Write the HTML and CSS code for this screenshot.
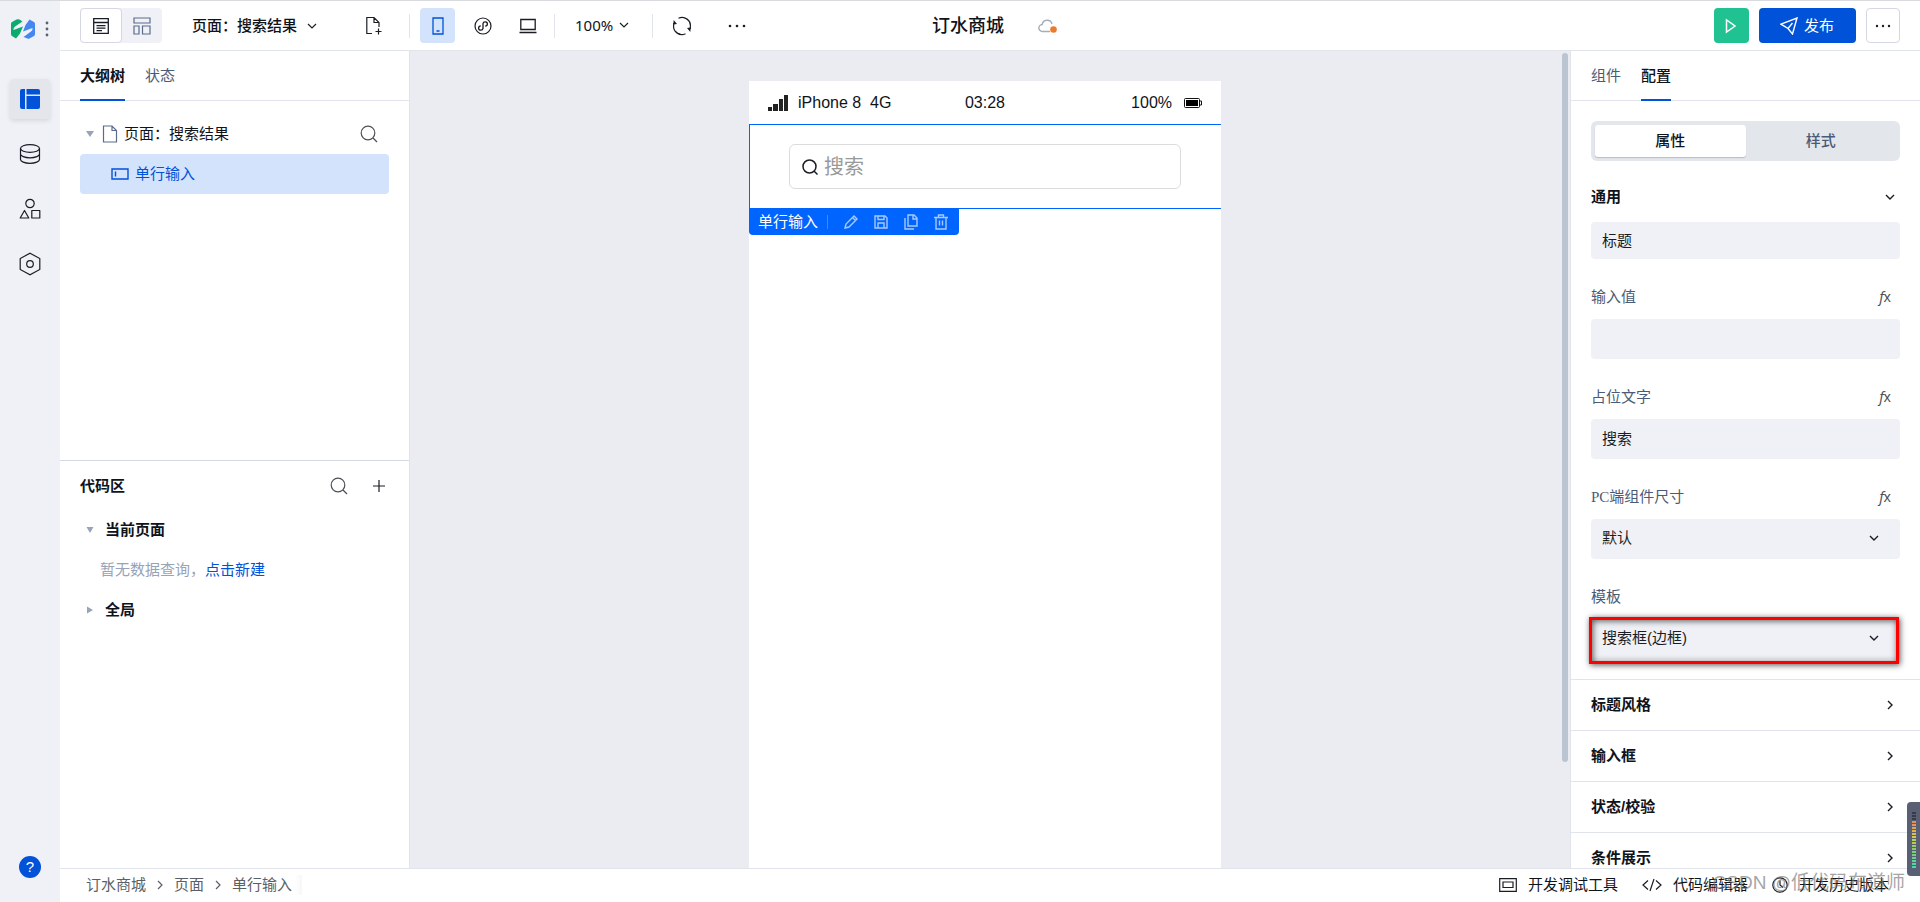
FILE: index.html
```html
<!DOCTYPE html>
<html lang="zh-CN">
<head>
<meta charset="utf-8">
<title>订水商城</title>
<link rel="stylesheet" href="styles.css">
</head>
<body>
<div class="app">
  <nav class="rail" aria-label="主导航">
    <div class="rail-brand">
      <svg width="24" height="20" viewBox="0 0 24 20"><path d="M0 5Q0 3.500 1 3L5.500.5Q7 0 8.500.5L11.500 2.500 4 7.500Q2 9 2.500 11L12 7.500 9 14.500 5 19.500 1 17Q0 16.500 0 15z" fill="#0aab6e"/><path d="M24 15q0 1.500-1 2l-4.500 2.500q-1 .5-2 0L12.500 18l7.500-5.500q2-1.500 1.500-3.500L12 12.500 14.500 6 18.500.5 23 3q1 .5 1 2z" fill="#4587f0"/></svg>
      <button class="plain" aria-label="菜单"><svg width="4" height="16" viewBox="0 0 4 16" fill="#5a6270"><circle cx="2" cy="2" r="1.400"/><circle cx="2" cy="8" r="1.400"/><circle cx="2" cy="14" r="1.400"/></svg></button>
    </div>
    <button class="rail-item active" aria-label="页面"><svg width="20" height="20" viewBox="0 0 20 20" fill="#0052d9"><path d="M2 0h3v20H2a2 2 0 0 1-2-2V2a2 2 0 0 1 2-2zM6.500 0H18a2 2 0 0 1 2 2v3.500H6.500zM6.500 7H20v11a2 2 0 0 1-2 2H6.500z"/></svg></button>
    <button class="rail-item" aria-label="数据"><svg class="ic" width="22" height="22" viewBox="0 0 22 22"><ellipse cx="11" cy="5.500" rx="9.500" ry="3.800"/><path d="M1.500 5.500v11c0 2 4 3.800 9.500 3.800s9.500-1.800 9.500-3.800v-11M1.500 11C1.500 13 5.500 14.800 11 14.800s9.500-1.800 9.500-3.800"/></svg></button>
    <button class="rail-item" aria-label="素材"><svg class="ic" width="22" height="22" viewBox="0 0 22 22"><circle cx="11" cy="5.500" r="4.200"/><path d="M5.500 12.500 1.200 20h8.600zM12.800 12.500h8v7.500h-8z" stroke-linejoin="round"/></svg></button>
    <button class="rail-item" aria-label="设置"><svg class="ic" width="22" height="24" viewBox="0 0 22 24"><path d="m11 1.200 9.800 5.300v11L11 22.800l-9.800-5.300v-11z"/><circle cx="11" cy="12" r="3.300"/></svg></button>
    <button class="help" aria-label="帮助">?</button>
  </nav>

  <header class="topbar">
    <div class="tools">
      <div class="view-switch">
        <button class="view on" aria-label="大纲视图"><svg class="ic" width="16" height="16" viewBox="0 0 16 16"><path d="M.7.7h14.600v14.600H.7zM.7 4.500h14.600M3.500 7.700h9M3.500 10.200h9M3.500 12.700h5.500" stroke-width="1.300"/></svg></button>
        <button class="view" aria-label="布局视图"><svg class="ic slate" width="18" height="18" viewBox="0 0 18 18"><path d="M1 1h16v5H1zM1 9h5v8H1zM9.500 9H17v8H9.500z"/></svg></button>
      </div>
      <button class="page-pick">页面：搜索结果 <svg class="ic" width="12" height="12" viewBox="0 0 12 12"><path d="m2 4 4 4 4-4"/></svg></button>
      <button class="tool new-page" aria-label="新建页面"><svg class="ic" width="18" height="20" viewBox="0 0 18 20"><path d="M7 17.500H1.800V1.500H9l5 5V11M9 1.500v5h5M13.500 12.500v6M10.500 15.500h6"/></svg></button>
      <span class="rule"></span>
      <div class="devices">
        <button class="tool chosen" aria-label="手机"><svg class="ic blue" width="12" height="18" viewBox="0 0 12 18"><path d="M1 1h10v16H1zM4.500 14h3" stroke-width="1.300"/></svg></button>
        <button class="tool" aria-label="小程序"><svg class="ic" width="18" height="18" viewBox="0 0 18 18"><circle cx="9" cy="9" r="8"/><path d="M6.800 8.800a2.200 2.200 0 1 0 2.200 2.500V6.700a2.200 2.200 0 1 1 2.200 2.500" stroke-width="1.300"/></svg></button>
        <button class="tool" aria-label="电脑"><svg class="ic" width="18" height="16" viewBox="0 0 18 16"><path d="M1.800 1.500h14.400v10H1.800zM.5 14.500h17" stroke-width="1.300"/></svg></button>
      </div>
      <span class="rule"></span>
      <button class="zoom">100% <svg class="ic" width="12" height="12" viewBox="0 0 12 12"><path d="m2 4 4 4 4-4"/></svg></button>
      <span class="rule"></span>
      <button class="tool refresh" aria-label="刷新"><svg class="ic" width="20" height="20" viewBox="0 0 20 20"><path d="M6.500 2.200A8.300 8.300 0 0 1 18.300 11v2M13.500 17.800A8.300 8.300 0 0 1 1.700 9V7M3.500 15.500a8.300 8.300 0 0 0 5 2.700M16.500 4.500a8.300 8.300 0 0 0-4-2.500"/><path d="m15 12 3.300 4 .4-4.500zM5 8 1.700 4l-.4 4.500z" fill="#1a1d24" stroke="none"/></svg></button>
      <button class="tool" aria-label="更多工具"><svg width="18" height="4" viewBox="0 0 18 4" fill="#1a1d24"><circle cx="2" cy="2" r="1.300"/><circle cx="9" cy="2" r="1.300"/><circle cx="16" cy="2" r="1.300"/></svg></button>
    </div>
    <div class="app-name">
      <h1>订水商城</h1>
      <svg width="20" height="16" viewBox="0 0 20 16"><path d="M12 13.500H4.500a3.500 3.500 0 0 1-.3-7A5 5 0 0 1 14 6" fill="none" stroke="#a3adbd" stroke-width="1.400"/><circle cx="15.500" cy="11.500" r="3.300" fill="#ed7b2f"/></svg>
    </div>
    <div class="actions">
      <button class="run" aria-label="预览"><svg width="12" height="16" viewBox="0 0 12 16"><path d="M1.500 2v12L10 8z" fill="none" stroke="#fff" stroke-width="1.500"/></svg></button>
      <button class="publish"><svg width="18" height="18" viewBox="0 0 18 18" fill="none" stroke="#fff" stroke-width="1.400"><path d="M1 7.200 17 1l-4.500 16L8 11.500zM8 11.500 12.500 6"/></svg>发布</button>
      <button class="more" aria-label="更多"><svg width="16" height="4" viewBox="0 0 16 4" fill="#1a1d24"><circle cx="2" cy="2" r="1.200"/><circle cx="8" cy="2" r="1.200"/><circle cx="14" cy="2" r="1.200"/></svg></button>
    </div>
  </header>

  <aside class="left">
    <section class="outline">
      <div class="tabs"><button class="tab current bold">大纲树</button><button class="tab">状态</button></div>
      <div class="tree">
        <div class="node">
          <svg class="caret" width="8" height="6" viewBox="0 0 8 6"><path d="M0 0h8L4 6z"/></svg>
          <svg class="ic slate" width="16" height="18" viewBox="0 0 16 18"><path d="M1.500 1H10l4.500 4.500V17h-13zM10 1v4.500h4.500"/></svg>
          <span class="node-name">页面：搜索结果</span>
          <button class="plain" aria-label="搜索大纲"><svg class="ic thin" width="18" height="18" viewBox="0 0 18 18"><circle cx="8" cy="8" r="6.800"/><path d="m13 13 4 4"/></svg></button>
        </div>
        <div class="node selected">
          <svg class="ic blue" width="18" height="12" viewBox="0 0 18 12"><path d="M1 1h16v10H1zM4.500 3.500v5" stroke-width="1.400"/></svg>
          <span>单行输入</span>
        </div>
      </div>
    </section>
    <section class="code">
      <div class="code-head">
        <h2>代码区</h2>
        <button class="plain" aria-label="搜索代码"><svg class="ic thin" width="18" height="18" viewBox="0 0 18 18"><circle cx="8" cy="8" r="6.800"/><path d="m13 13 4 4"/></svg></button>
        <button class="plain" aria-label="新建"><svg class="ic" width="14" height="14" viewBox="0 0 14 14"><path d="M7 1v12M1 7h12"/></svg></button>
      </div>
      <button class="group"><svg class="caret" width="8" height="6" viewBox="0 0 8 6"><path d="M.5 0h7L4 6z"/></svg>当前页面</button>
      <p class="empty">暂无数据查询，<a href="#new">点击新建</a></p>
      <button class="group"><svg class="caret" width="8" height="8" viewBox="0 0 8 8"><path d="M1 .5v7L7 4z"/></svg>全局</button>
    </section>
  </aside>

  <main class="canvas">
    <div class="phone">
      <div class="status">
        <span class="carrier"><svg width="20" height="16" viewBox="0 0 20 16" fill="#222"><path d="M0 12h4v4H0zM5 9h5v7H5zM11 4h4v12h-4zM16 0h4v16h-4z"/></svg>iPhone 8&nbsp; 4G</span>
        <span>03:28</span>
        <span class="battery">100%<svg width="18" height="10" viewBox="0 0 18 10"><rect x=".5" y=".5" width="15" height="9" rx="1" fill="none" stroke="#111"/><path d="M2 2h12v6H2z"/><path d="M16 3h1.500v4H16" fill="none" stroke="#111"/></svg></span>
      </div>
      <div class="picked">
        <div class="search">
          <svg class="ic" width="16" height="16" viewBox="0 0 16 16"><circle cx="7.500" cy="7.500" r="6.500" stroke-width="1.500"/><path d="m12 12 3.500 3.500" stroke-width="1.500"/></svg>
          <input type="text" placeholder="搜索" aria-label="搜索">
        </div>
      </div>
      <div class="node-bar">
        <span class="node-bar-name">单行输入</span>
        <button aria-label="编辑"><svg width="14" height="14" viewBox="0 0 14 14"><path d="m1 13 1-4 8-8 3 3-8 8zM8.500 2.500l3 3"/></svg></button>
        <button aria-label="保存"><svg width="14" height="14" viewBox="0 0 14 14"><path d="M1 1h10l2 2v10H1zM4 1v3.500h6V1M4 13V8h6v5"/></svg></button>
        <button aria-label="复制"><svg width="14" height="16" viewBox="0 0 14 16"><path d="M4 1h6l3 3v8H4zM9 1v4h4M1 4v11h9"/></svg></button>
        <button aria-label="删除"><svg width="14" height="16" viewBox="0 0 14 16"><path d="M0 3.500h14M2 3.500V15h10V3.500M4.500 3V1h5v2M5.500 6.500v5M8.500 6.500v5"/></svg></button>
      </div>
    </div>
    <div class="scroll-track"><div class="thumb"></div></div>
  </main>

  <aside class="right">
    <div class="tabs"><button class="tab">组件</button><button class="tab current">配置</button></div>
    <div class="config">
      <div class="segment"><button class="seg on">属性</button><button class="seg">样式</button></div>
      <button class="fold open">通用<svg class="ic" width="12" height="12" viewBox="0 0 12 12"><path d="m2 4 4 4 4-4" stroke-width="1.400"/></svg></button>
      <input class="box short" type="text" value="标题" aria-label="标题">
      <div class="field">
        <div class="label-row"><label for="val">输入值</label><button class="fx" aria-label="输入值表达式"><i>f</i>x</button></div>
        <input class="box" id="val" type="text">
      </div>
      <div class="field">
        <div class="label-row"><label for="hint">占位文字</label><button class="fx" aria-label="占位文字表达式"><i>f</i>x</button></div>
        <input class="box" id="hint" type="text" value="搜索">
      </div>
      <div class="field">
        <div class="label-row"><label for="size">PC端组件尺寸</label><button class="fx" aria-label="尺寸表达式"><i>f</i>x</button></div>
        <div class="drop"><select class="box" id="size"><option>默认</option></select><svg class="ic" width="12" height="12" viewBox="0 0 12 12"><path d="m2 4 4 4 4-4" stroke-width="1.400"/></svg></div>
      </div>
      <div class="field">
        <div class="label-row"><label for="tpl">模板</label></div>
        <div class="drop marked"><select class="box" id="tpl"><option>搜索框(边框)</option></select><svg class="ic" width="12" height="12" viewBox="0 0 12 12"><path d="m2 4 4 4 4-4" stroke-width="1.400"/></svg></div>
      </div>
    </div>
    <button class="fold">标题风格<svg class="ic" width="12" height="12" viewBox="0 0 12 12"><path d="m4 2 4 4-4 4" stroke-width="1.400"/></svg></button>
    <button class="fold">输入框<svg class="ic" width="12" height="12" viewBox="0 0 12 12"><path d="m4 2 4 4-4 4" stroke-width="1.400"/></svg></button>
    <button class="fold">状态/校验<svg class="ic" width="12" height="12" viewBox="0 0 12 12"><path d="m4 2 4 4-4 4" stroke-width="1.400"/></svg></button>
    <button class="fold">条件展示<svg class="ic" width="12" height="12" viewBox="0 0 12 12"><path d="m4 2 4 4-4 4" stroke-width="1.400"/></svg></button>
  </aside>

  <footer class="bottom">
    <nav class="crumbs" aria-label="路径">
      <a href="#app">订水商城</a><svg class="ic grey" width="8" height="10" viewBox="0 0 8 10"><path d="m2 1 4 4-4 4"/></svg>
      <a href="#page">页面</a><svg class="ic grey" width="8" height="10" viewBox="0 0 8 10"><path d="m2 1 4 4-4 4"/></svg>
      <a class="last" href="#node">单行输入</a>
    </nav>
    <div class="dev">
      <button class="dev-item"><svg class="ic" width="18" height="14" viewBox="0 0 18 14"><path d="M.7.7h16.600v12.600H.7zM4 4h10v5.500H4z"/></svg>开发调试工具</button>
      <button class="dev-item"><svg class="ic" width="20" height="14" viewBox="0 0 20 14"><path d="M6 2.500 1 7l5 4.500M14 2.500 19 7l-5 4.500M12 1 8 13"/></svg>代码编辑器</button>
      <button class="dev-item"><svg class="ic" width="16" height="16" viewBox="0 0 16 16"><circle cx="8" cy="8" r="7.200"/><path d="M8 3.500V8l3 2.500"/></svg>开发历史版本</button>
    </div>
  </footer>
  <div class="watermark">CSDN @低代码布道师</div>
  <div class="meter"><span class="meter-bars"></span></div>
</div>
</body>
</html>
```

FILE: styles.css
```css
* { box-sizing: border-box; }

body {
  margin: 0;
  font: 15px/20px "Liberation Sans", "Noto Sans CJK SC", sans-serif;
  color: #0f131a;
}

button, input, select { font: inherit; color: inherit; }

button {
  border: 0;
  padding: 0;
  background: none;
  cursor: pointer;
  display: inline-flex;
  align-items: center;
  justify-content: center;
}

h1, h2, p { margin: 0; }
svg { flex: none; display: block; }

.ic { fill: none; stroke: #1a1d24; stroke-width: 1.2; }
.ic.slate { stroke: #5a6b8c; }
.ic.blue { stroke: #0052d9; }
.ic.thin { stroke: #4b5057; }
.ic.grey { stroke: #5b5f66; }
.caret { fill: #97a3b7; }

.app {
  position: relative;
  display: grid;
  grid-template: 50px minmax(0, 1fr) 34px / 60px 350px minmax(0, 1fr) 350px;
  height: 100vh;
  border-top: 1px solid #d9dadd;
  overflow: hidden;
  background: #fff;
}

/* Icon rail */
.rail {
  grid-row: 1 / 4;
  display: flex;
  flex-direction: column;
  align-items: center;
  gap: 15px;
  padding: 18px 0 24px;
  background: #eff1f6;
}

.rail-brand { display: flex; align-items: center; gap: 10px; margin-bottom: 25px; }
.rail-item { width: 40px; height: 40px; border-radius: 4px; }
.rail-item.active { background: #e4e6eb; box-shadow: 0 2px 4px #d5d8df; }

.help {
  width: 22px;
  height: 22px;
  margin-top: auto;
  border-radius: 50%;
  background: #0052d9;
  color: #fff;
}

/* Top bar */
.topbar {
  grid-column: 2 / 5;
  display: grid;
  grid-template-columns: 1fr auto 1fr;
  align-items: center;
  padding: 0 20px;
  border-bottom: 1px solid #e1e4ea;
}

.tools, .devices { display: flex; align-items: center; }
.devices { gap: 10px; padding: 0 9px 0 10px; }
.view-switch { display: flex; border-radius: 4px; background: #eff1f6; }
.view { width: 40px; height: 35px; }
.view.on { width: 42px; border: 1px solid #d4d8e2; border-radius: 4px; background: #fff; }
.page-pick { gap: 9px; margin: 0 30px 0 30px; font-weight: 500; }
.tool { width: 35px; height: 35px; border-radius: 4px; }
.tool.new-page { margin: 0 18px 0 8px; }
.tool.chosen { background: #d3e3fc; }
.tool.refresh { margin: 0 20px 0 11px; }
.rule { width: 1px; height: 24px; background: #e1e4ea; }
.zoom { gap: 5px; padding: 0 22px 2px 20px; font-family: "Noto Sans", sans-serif; }

.app-name { display: flex; align-items: center; gap: 34px; padding-left: 10px; }
.app-name h1 { font-size: 18px; line-height: 24px; font-weight: 500; }

.actions { display: flex; justify-content: flex-end; gap: 10px; }
.actions button { height: 35px; border-radius: 4px; }
.run { width: 35px; background: #20c291; }
.publish { gap: 6px; padding: 0 22px 0 21px; background: #0052d9; color: #fff; }
.actions .more { width: 34px; border: 1px solid #d4d8e2; }

/* Shared tab strip */
.tabs { display: flex; gap: 20px; height: 50px; padding: 0 20px; border-bottom: 1px solid #e1e4ea; }
.tab { height: 50px; padding-top: 2px; border-bottom: 2px solid transparent; color: #4b5b76; }
.tab.current { border-color: #0052d9; color: #0f131a; font-weight: 500; }
.tab.bold { font-weight: 700; }

/* Left panel */
.left {
  display: grid;
  grid-template-rows: 409px minmax(0, 1fr);
  border-right: 1px solid #e1e4ea;
}

.tree { padding: 12px 20px; }
.node { display: flex; align-items: center; gap: 6px; height: 41px; padding: 0 11px 0 6px; }
.node .caret { margin-right: 2px; }
.node-name { flex: 1; }
.node.selected { height: 40px; padding-left: 31px; border-radius: 4px; background: #d3e3fc; color: #0052d9; }

.code { border-top: 1px solid #d3dae6; padding: 0 20px; }
.code-head { display: flex; align-items: center; gap: 24px; height: 49px; padding-right: 3px; }
.code h2 { flex: 1; font-size: 15px; font-weight: 700; line-height: 20px; }
.group { gap: 11px; height: 40px; padding-left: 6px; font-weight: 700; }
.code .group { display: flex; }
.empty { padding: 10px 0 10px 20px; color: #97a3b7; }
.empty a { color: #0052d9; text-decoration: none; }

/* Canvas */
.canvas {
  display: grid;
  grid-template-columns: minmax(0, 1fr) 10px;
  background: #ebecf1;
  min-height: 0;
}

.phone {
  width: 472px;
  max-width: 100%;
  margin: 30px auto 0;
  background: #fff;
}

.status {
  display: grid;
  grid-template-columns: 1fr auto 1fr;
  align-items: center;
  height: 43px;
  padding: 0 19px;
  font-size: 16px;
}

.carrier, .battery { display: flex; align-items: center; gap: 10px; }
.battery { justify-content: flex-end; gap: 12px; }
.picked { padding: 19px 40px 19px 39px; border: 1px solid #0064ff; border-right: 0; }

.search {
  display: flex;
  align-items: center;
  gap: 6px;
  height: 45px;
  padding: 0 12px;
  border: 1px solid #dcdcdc;
  border-radius: 6px;
}

.search input { flex: 1; min-width: 0; border: 0; padding: 0; outline: 0; font-size: 20px; line-height: 28px; }
.search input::placeholder { color: #999; }

.node-bar {
  display: inline-flex;
  align-items: center;
  gap: 16px;
  height: 26px;
  padding: 0 11px 0 9px;
  border-radius: 0 0 4px 4px;
  background: #0064ff;
  color: #fff;
  vertical-align: top;
}

.node-bar-name { padding-right: 9px; border-right: 1px solid #3d88ff; line-height: 14px; }
.node-bar svg { fill: none; stroke: #a6c9ff; stroke-width: 1.4; }
.scroll-track { padding: 2px 2px 0; }
.thumb { width: 6px; height: 87%; border-radius: 3px; background: #bbc4d1; }

/* Configuration panel */
.right { border-left: 1px solid #e1e4ea; overflow: hidden; min-height: 0; }
.config { display: flex; flex-direction: column; padding: 20px; }
.segment { display: flex; height: 40px; padding: 4px; border-radius: 6px; background: #e3e6eb; }
.seg { flex: 1; color: #4b5b76; font-weight: 500; border-radius: 3px; }
.seg.on { background: #fff; color: #0f131a; box-shadow: 0 1px 1px #b4bccb; }

.fold {
  display: flex;
  justify-content: space-between;
  width: 100%;
  height: 51px;
  padding: 0 24px 0 20px;
  border-top: 1px solid #e1e4ea;
  font-weight: 700;
}

.fold.open { height: 61px; padding: 10px 4px 0 0; border: 0; }

.box {
  width: 100%;
  height: 40px;
  padding: 0 11px 3px;
  border: 0;
  border-radius: 4px;
  outline: 0;
  appearance: none;
  background: #eff1f6;
  color: #1a1d24;
}

select.box { padding-bottom: 2px; }
.box.short { height: 37px; }
.field { padding-top: 20px; }
.label-row { display: flex; align-items: center; justify-content: space-between; height: 40px; padding: 0 9px 5px 0; }
.label-row label { font-family: "Liberation Serif", "Noto Sans CJK SC", serif; color: #4b5b76; }
.fx { font-family: "Noto Sans", sans-serif; font-size: 14px; color: #4b5057; }
.drop { position: relative; }
.drop svg { position: absolute; right: 20px; top: 13px; pointer-events: none; }

.marked::after {
  content: "";
  position: absolute;
  inset: -2px 1px -5px -2px;
  border: 3px solid #f00;
  box-shadow: 1px 1px 6px #555, inset 1px 1px 6px #555;
  pointer-events: none;
}

/* Bottom bar */
.bottom {
  grid-column: 2 / 5;
  display: flex;
  justify-content: space-between;
  align-items: center;
  padding: 0 31px 2px 26px;
  border-top: 1px solid #e1e4ea;
  background: #fff;
}

.crumbs, .dev { display: flex; align-items: center; }
.crumbs { gap: 10px; }
.crumbs a { color: #5b5f66; text-decoration: none; }
.crumbs .last { padding-right: 10px; background: linear-gradient(90deg, #fff 90%, #f6f7f9); }
.dev { gap: 24px; }
.dev-item { gap: 11px; }

.watermark {
  position: absolute;
  right: 15px;
  bottom: 6px;
  font-size: 19px;
  line-height: 26px;
  color: #777a;
  pointer-events: none;
}

.meter {
  position: absolute;
  right: 0;
  bottom: 26px;
  width: 13px;
  height: 74px;
  padding: 9px 4px 8px 5px;
  border-radius: 4px 0 0 4px;
  background: #596073;
}

.meter-bars {
  display: block;
  height: 100%;
  background:
    repeating-linear-gradient(#596073 0 1px, transparent 1px 3px),
    linear-gradient(#363b49 0 16%, #e58a5c 18%, #d9c94e 45%, #8ecb68 65%, #45d6b4);
}
```
